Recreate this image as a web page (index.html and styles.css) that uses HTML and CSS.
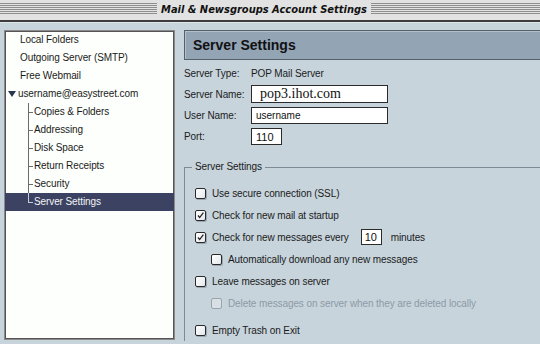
FILE: index.html
```html
<!DOCTYPE html>
<html lang="en">
<head>
  <meta charset="UTF-8">
  <title>Mail &amp; Newsgroups Account Settings</title>
  <link rel="stylesheet" href="styles.css">
</head>
<body>
  <div class="titlebar">
    <span class="title">Mail &amp; Newsgroups Account Settings</span>
  </div>

  <div class="main">
    <ul class="tree">
      <li class="item">Local Folders</li>
      <li class="item">Outgoing Server (SMTP)</li>
      <li class="item">Free Webmail</li>
      <li class="item account"><span class="twisty"></span>username@easystreet.com</li>
      <li class="item child">Copies &amp; Folders</li>
      <li class="item child">Addressing</li>
      <li class="item child">Disk Space</li>
      <li class="item child">Return Receipts</li>
      <li class="item child">Security</li>
      <li class="item child last selected">Server Settings</li>
    </ul>

    <section class="panel">
      <h2 class="panel-head">Server Settings</h2>

      <div class="fields">
        <span class="label">Server Type:</span>
        <span class="value">POP Mail Server</span>

        <span class="label">Server Name:</span>
        <input class="field wide serif" type="text" value="pop3.ihot.com">

        <span class="label">User Name:</span>
        <input class="field wide" type="text" value="username">

        <span class="label">Port:</span>
        <input class="field port" type="text" value="110">
      </div>

      <fieldset class="group">
        <legend>Server Settings</legend>

        <div class="row"><span class="box"></span>Use secure connection (SSL)</div>
        <div class="row"><span class="box checked"><svg viewBox="0 0 11 11"><path d="M2.5 5.5 L4.5 8 L9 2" fill="none" stroke="#222" stroke-width="1.6"/></svg></span>Check for new mail at startup</div>
        <div class="row"><span class="box checked"><svg viewBox="0 0 11 11"><path d="M2.5 5.5 L4.5 8 L9 2" fill="none" stroke="#222" stroke-width="1.6"/></svg></span>Check for new messages every <input class="field mins" type="text" value="10"> minutes</div>
        <div class="row sub"><span class="box"></span>Automatically download any new messages</div>
        <div class="row"><span class="box"></span>Leave messages on server</div>
        <div class="row sub disabled"><span class="box"></span>Delete messages on server when they are deleted locally</div>
        <div class="row gap"><span class="box"></span>Empty Trash on Exit</div>
      </fieldset>
    </section>
  </div>
</body>
</html>
```

FILE: styles.css
```css
:root {
  --bg: #c7d4dc;
  --ink: #1b1b1b;
  --line: #6c6c6c;
  --head: #93a4b5;
  --select: #3b4262;
}
body {
  margin: 0;
  width: 540px;
  height: 344px;
  overflow: hidden;
  background: var(--bg);
  color: var(--ink);
  font-family: 'Liberation Sans', Arial, sans-serif;
  font-size: 10px;
  letter-spacing: -0.1px;
}

/* window title */
.titlebar {
  height: 20px;
  display: flex;
  justify-content: center;
  align-items: center;
  background-color: #e2e2e2;
  background-image: repeating-linear-gradient(#8e8e8e 0 1px, #e2e2e2 1px 2px);
  background-size: 100% 12px;
  background-position: 0 3px;
  background-repeat: no-repeat;
  border-bottom: 2px solid #3d3d3d;
  box-shadow: 0 1px 0 #dfe6ea;
  padding-right: 12px;
}
.title {
  background: #e2e2e2;
  padding: 0 4px;
  font-family: 'DejaVu Sans', sans-serif;
  font-stretch: condensed;
  font-style: italic;
  font-weight: bold;
  font-size: 11px;
  letter-spacing: 0;
  line-height: 18px;
  color: #111;
}

.main {
  display: flex;
  align-items: flex-start;
  padding: 8px 0 0 4px;
}

/* account tree */
.tree {
  list-style: none;
  margin: 0;
  padding: 0;
  width: 169px;
  height: 308px;
  background: #fdfffc;
  border: 1px solid #8a8a8a;
  box-shadow: inset 1px 1px 0 #555, inset -1px -1px 0 #555;
  flex-shrink: 0;
}
.item {
  height: 18px;
  line-height: 18px;
  padding-left: 15px;
  white-space: nowrap;
}
.account {
  padding-left: 3px;
  display: flex;
  align-items: center;
}
.twisty {
  width: 0;
  height: 0;
  border-left: 4px solid transparent;
  border-right: 4px solid transparent;
  border-top: 6px solid #2c3550;
  margin-right: 2px;
}
.child {
  padding-left: 29px;
  background:
    linear-gradient(var(--line), var(--line)) 23px 0 / 1px 100% no-repeat,
    linear-gradient(var(--line), var(--line)) 23px 50% / 5px 1px no-repeat;
}
.child.last {
  background:
    linear-gradient(#c9ccd8, #c9ccd8) 23px 0 / 1px 9px no-repeat,
    linear-gradient(#c9ccd8, #c9ccd8) 23px 9px / 5px 1px no-repeat,
    var(--select);
}
.selected {
  color: #f4f4f4;
}

/* right panel */
.panel {
  flex: 1;
  margin-left: 9px;
}
.panel-head {
  margin: 0 -20px 0 0;
  height: 28px;
  line-height: 28px;
  padding-left: 8px;
  background: var(--head);
  border: 1px solid #56606c;
  box-shadow: inset 1px 1px 0 #b2c0cc;
  font-size: 14px;
  font-weight: bold;
  letter-spacing: 0;
  color: #111;
}

.fields {
  display: grid;
  grid-template-columns: 67px auto;
  grid-template-rows: 16px 18px 17px 17px;
  row-gap: 4px;
  align-items: center;
  justify-items: start;
  margin-top: 5px;
}
.field {
  box-sizing: border-box;
  height: 100%;
  margin: 0;
  padding: 0 4px;
  border: 1px solid #2b2b2b;
  background: #fff;
  color: #111;
  font-family: 'Liberation Sans', Arial, sans-serif;
  font-size: 10px;
  outline: none;
}
.wide {
  width: 137px;
}
.serif {
  font-family: 'Liberation Serif', 'Times New Roman', serif;
  font-size: 14px;
  padding-left: 8px;
}
.port {
  width: 31px;
  font-size: 11px;
}

.group {
  margin: 15px -20px 0 0;
  padding: 8px 0 0 10px;
  border: 0;
  border-top: 1px solid #7d8995;
  border-left: 1px solid #7d8995;
}
.group legend {
  padding: 0 3px;
  margin-left: -3px;
  line-height: 14px;
}
.row {
  height: 22px;
  display: flex;
  align-items: center;
  white-space: nowrap;
}
.row.sub {
  padding-left: 16px;
}
.row.gap {
  margin-top: 5px;
}
.box {
  box-sizing: border-box;
  width: 11px;
  height: 11px;
  margin-right: 6px;
  border: 1px solid #2a2a2a;
  border-radius: 2px;
  background: linear-gradient(135deg, #fff, #e4e8ec);
  box-shadow: 1px 1px 0 #9aa6b0;
  flex-shrink: 0;
  display: flex;
}
.box svg {
  width: 100%;
  height: 100%;
}
.disabled {
  color: #8d9aa6;
}
.disabled .box {
  border-color: #9aa4ad;
  background: #d9e0e5;
  box-shadow: none;
}
.mins {
  width: 21px;
  height: 16px;
  margin: 0 9px 0 12px;
  padding: 0 3px;
  font-size: 11px;
}
```
